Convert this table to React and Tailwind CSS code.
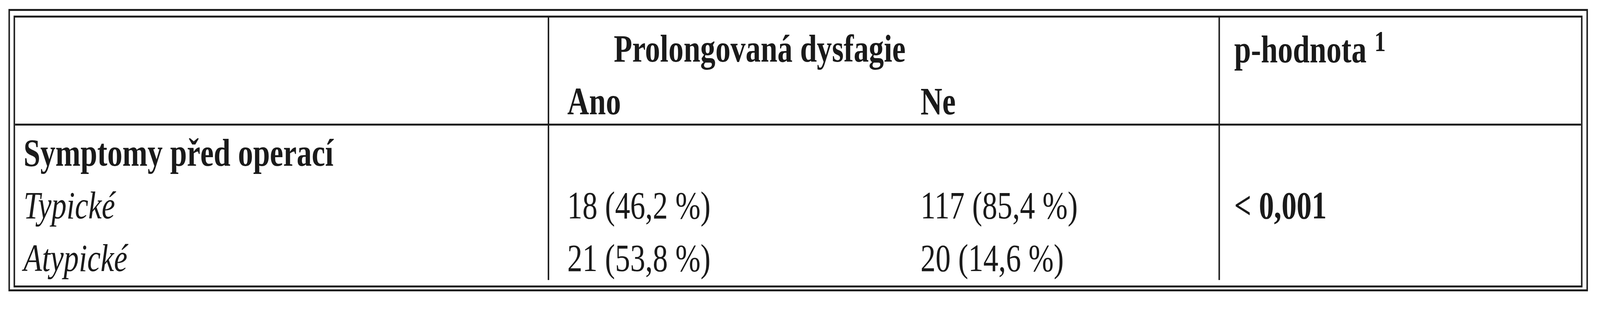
const rows = [
  { label: "Typické", ano: "18 (46,2 %)", ne: "117 (85,4 %)", p: "< 0,001" },
  { label: "Atypické", ano: "21 (53,8 %)", ne: "20 (14,6 %)", p: "" }
];

const cell = "h-[113px] leading-[113px] whitespace-nowrap";

// the design is drawn on a 5305px wide sheet; squeeze it to the window when the window is narrower
const SHEET_WIDTH = 5305;

const App = () => {

  const fit = Math.min(1, window.innerWidth / SHEET_WIDTH);

  return (

    <div className="w-full h-[800px] overflow-hidden bg-white">

      <div
        className="w-[5305px] h-[800px] origin-top-left pt-[23px] pl-[28px] text-[100px] text-[#1a1a1a]"
        style={{
          fontFamily: '"Liberation Serif", "Times New Roman", serif',
          transform: `scaleX(${fit})`
        }}
      >

        <div className="w-[5237px] border-[5px] border-[#1e1e1e] pt-[12px] pl-[12px] pr-[13px] pb-[5px]">

          <div className="border-[5px] border-[#1e1e1e]">

            {/* header */}
            <div className="grid grid-cols-[1766px_2224px_1fr] h-[277px] border-b-[5px] border-[#1e1e1e] font-bold">

              <div />

              <div className="border-l-[5px] border-[#1e1e1e] pl-[60px] pt-[23px]">
                <div className={`${cell} pl-[154px]`}>Prolongovaná dysfagie</div>
                <div className="grid grid-cols-[1171px_1fr] mt-[22px]">
                  <div className={cell}>Ano</div>
                  <div className={cell}>Ne</div>
                </div>
              </div>

              <div className="border-l-[5px] border-[#1e1e1e] pl-[47px] pt-[23px]">
                <div className={cell}>
                  p-hodnota
                  <span className="ml-[26px] text-[75px] leading-none align-[29px]">1</span>
                </div>
              </div>

            </div>

            {/* body */}
            <div className="grid grid-cols-[1766px_2224px_1fr]">

              <div className="pl-[28px] pt-[13px] flex flex-col gap-[22px]">
                <div className={`${cell} font-bold`}>Symptomy před operací</div>
                {rows.map((r) => (
                  <div key={r.label} className={`${cell} italic`}>{r.label}</div>
                ))}
              </div>

              <div className="border-l-[5px] border-[#1e1e1e] pl-[60px] pt-[13px] grid grid-cols-[1171px_1fr] gap-y-[22px] content-start">
                <div className={cell} />
                <div className={cell} />
                {rows.map((r) => (
                  <div key={r.label} className="contents">
                    <div className={cell}>{r.ano}</div>
                    <div className={cell}>{r.ne}</div>
                  </div>
                ))}
              </div>

              <div className="border-l-[5px] border-[#1e1e1e] pl-[47px] pt-[13px] flex flex-col gap-[22px]">
                <div className={cell} />
                {rows.map((r) => (
                  <div key={r.label} className={`${cell} font-bold`}>{r.p}</div>
                ))}
              </div>

            </div>

            <div className="h-[14px]" />

          </div>

        </div>

      </div>

    </div>

  );

};

export default App;
